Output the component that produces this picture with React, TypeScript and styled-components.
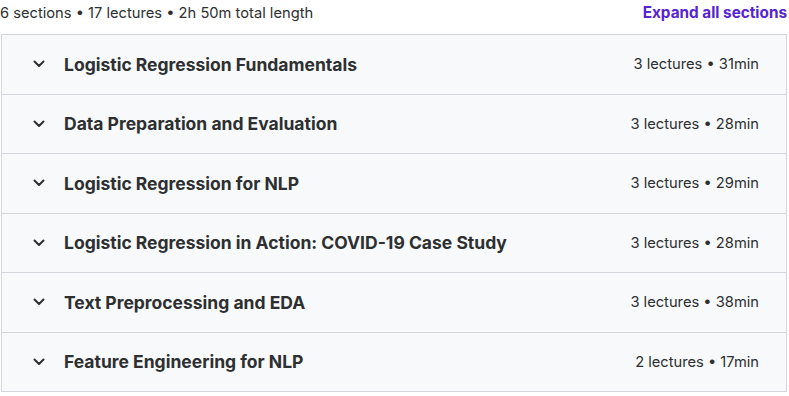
import React from "react";
import styled, { createGlobalStyle } from "styled-components";

const Global = createGlobalStyle`
  html, body { margin: 0; padding: 0; background: #ffffff; }
  body { font-family: Inter, "Noto Sans", sans-serif; color: #2d2f31; }
`;

const Page = styled.div`
  width: 789px;
  display: flex;
  flex-direction: column;
`;

const Header = styled.div`
  display: flex;
  justify-content: space-between;
  align-items: center;
  height: 25px;
  padding: 0 2px 0 0;
  margin-bottom: 9px;
`;

const Summary = styled.span`
  font-size: 14.7px;
  color: #2d2f31;
`;

const ExpandLink = styled.button`
  border: none;
  background: none;
  padding: 0;
  font-family: inherit;
  font-size: 15.3px;
  font-weight: 700;
  color: #5624d0;
  cursor: pointer;
`;

const Accordion = styled.div`
  margin-left: 1px;
  width: 784px;
  border: 1px solid #d1d7dc;
  display: flex;
  flex-direction: column;
`;

const Row = styled.div<{ $first?: boolean }>`
  height: 58.5px;
  box-sizing: content-box;
  background: #f7f9fa;
  border-top: ${(p) => (p.$first ? "none" : "1px solid #d1d7dc")};
  display: flex;
  align-items: center;
  padding: 0 27px 0 31px;
`;

const Chevron = styled.svg`
  width: 12px;
  height: 8px;
  flex-shrink: 0;
  margin-right: 19px;
`;

const Title = styled.span`
  flex: 1;
  font-size: 17.5px;
  font-weight: 700;
  color: #2d2f31;
`;

const Meta = styled.span`
  font-size: 14.7px;
  color: #2d2f31;
`;

const sections = [
  { title: "Logistic Regression Fundamentals", meta: "3 lectures • 31min" },
  { title: "Data Preparation and Evaluation", meta: "3 lectures • 28min" },
  { title: "Logistic Regression for NLP", meta: "3 lectures • 29min" },
  { title: "Logistic Regression in Action: COVID-19 Case Study", meta: "3 lectures • 28min" },
  { title: "Text Preprocessing and EDA", meta: "3 lectures • 38min" },
  { title: "Feature Engineering for NLP", meta: "2 lectures • 17min" },
];

export default function App() {
  return (
    <Page>
      <Global />
      <Header>
        <Summary>6 sections • 17 lectures • 2h 50m total length</Summary>
        <ExpandLink>Expand all sections</ExpandLink>
      </Header>
      <Accordion>
        {sections.map((s, i) => (
          <Row key={s.title} $first={i === 0}>
            <Chevron viewBox="0 0 12 8" fill="none" stroke="#2d2f31" strokeWidth="2" strokeLinecap="round" strokeLinejoin="round">
              <path d="M1.5 1.5L6 6l4.5-4.5" />
            </Chevron>
            <Title>{s.title}</Title>
            <Meta>{s.meta}</Meta>
          </Row>
        ))}
      </Accordion>
    </Page>
  );
}
